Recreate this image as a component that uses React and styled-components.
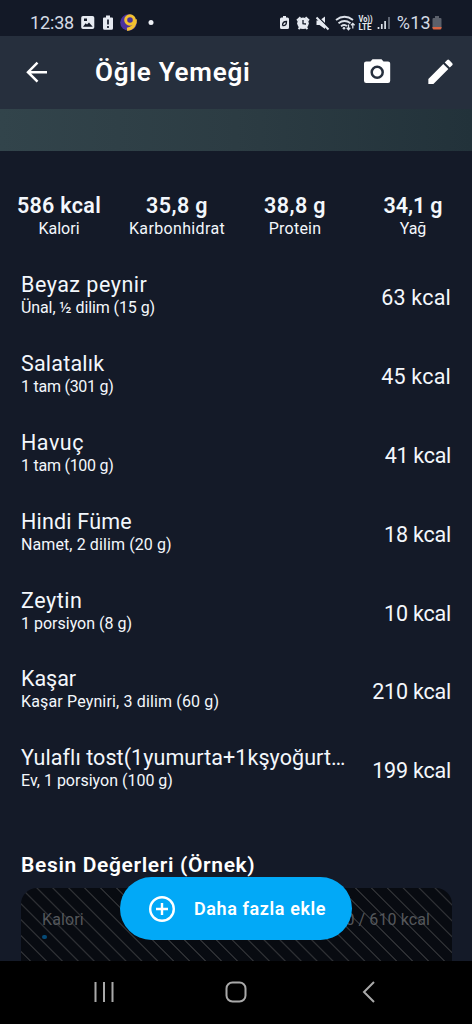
import React from 'react';
import styled, { createGlobalStyle } from 'styled-components';

const GlobalStyle = createGlobalStyle`
    body {
        margin: 0;
        background: #141a28;
        overflow: hidden;
    }

    * {
        box-sizing: border-box;
    }
`;

const Screen = styled.div`
    position: relative;
    display: flex;
    flex-direction: column;
    width: 472px;
    height: 1024px;
    overflow: hidden;
    background: #141a28;
    color: #f3f7fc;
    font-family: Roboto, "Noto Sans", sans-serif;
`;

const StatusBar = styled.div`
    flex: none;
    display: flex;
    align-items: center;
    justify-content: space-between;
    height: 36px;
    padding: 9px 29px 0 30px;
    background: #131927;
`;

const StatusGroup = styled.div`
    display: flex;
    align-items: center;
    gap: ${(p) => p.$gap || 0}px;

    svg {
        display: block;
    }
`;

const StatusText = styled.span`
    font-size: 18px;
    line-height: 20px;
    letter-spacing: ${(p) => p.$track || 0}px;
    color: #d5dbe5;
`;

const Header = styled.header`
    flex: none;
    display: flex;
    align-items: center;
    height: 73px;
    padding: 0 18px 0 22px;
    background: #262f3d;
`;

const IconButton = styled.button`
    display: flex;
    padding: 0;
    border: none;
    background: none;
    color: #fff;

    & + & {
        margin-left: 35px;
    }
`;

const Title = styled.h1`
    flex: 1;
    margin: 0 0 1px 43px;
    font-size: 26px;
    font-weight: 600;
    line-height: 30px;
    letter-spacing: 0.75px;
    color: #fff;
`;

const Banner = styled.div`
    flex: none;
    height: 42px;
    background: linear-gradient(to right, #32444b, #2c3c43 50%, #22323a);
`;

const Content = styled.main`
    flex: 1;
    min-height: 0;
    overflow: hidden;
`;

const Stats = styled.div`
    display: grid;
    grid-template-columns: repeat(4, 1fr);
    padding-top: 42px;
    text-align: center;
`;

const StatValue = styled.div`
    font-size: 21.5px;
    font-weight: 600;
    line-height: 25px;
    letter-spacing: ${(p) => p.$track}px;
`;

const StatLabel = styled.div`
    font-size: 16px;
    line-height: 21px;
    letter-spacing: ${(p) => p.$track}px;
`;

const FoodList = styled.ul`
    margin: 20px 0 0;
    padding: 0;
    list-style: none;
`;

const FoodRow = styled.li`
    display: flex;
    align-items: center;
    justify-content: space-between;
    height: 78.8px;
    padding: 0 21px;
`;

const FoodText = styled.div`
    padding-bottom: 4px;
`;

const FoodName = styled.div`
    font-size: 21.5px;
    line-height: 24px;
    white-space: nowrap;
    letter-spacing: ${(p) => p.$track}px;
`;

const FoodAmount = styled.div`
    font-size: 16px;
    line-height: 22px;
    white-space: nowrap;
    letter-spacing: ${(p) => p.$track}px;
`;

const FoodKcal = styled.div`
    font-size: 21.5px;
    line-height: 26px;
    white-space: nowrap;
    letter-spacing: ${(p) => p.$track}px;
`;

const SectionTitle = styled.h2`
    margin: 41px 21px 0;
    font-size: 21px;
    font-weight: 600;
    line-height: 26px;
    letter-spacing: 0.65px;
    color: #fff;
`;

const LockedCard = styled.div`
    height: 96px;
    margin: 10px 20px 0 21px;
    padding: 22px 22px 0 21px;
    border-radius: 16px;
    background:
        repeating-linear-gradient(
            45deg,
            #2d2f33 0,
            #2d2f33 0.7px,
            transparent 1.3px,
            transparent 10.66px,
            #2d2f33 11.26px
        ),
        #080b11;
    color: #54575b;
    font-size: 16px;
    line-height: 20px;
`;

const LockedLine = styled.div`
    display: flex;
    justify-content: space-between;
    letter-spacing: 0.1px;
`;

const Progress = styled.div`
    width: 5px;
    height: 4px;
    margin-top: 5px;
    border-radius: 2px;
    background: #064b78;
`;

const AddButton = styled.button`
    position: absolute;
    left: 120px;
    top: 877px;
    display: flex;
    align-items: center;
    width: 232px;
    height: 63px;
    padding: 0 0 0 28px;
    border: none;
    border-radius: 32px;
    background: #02a9f7;
    color: #fff;
    font-family: inherit;
    font-size: 18px;
    font-weight: 600;
    letter-spacing: 0.6px;
    white-space: nowrap;

    svg {
        flex: none;
        margin-right: 18px;
    }
`;

const NavBar = styled.nav`
    flex: none;
    display: flex;
    align-items: center;
    justify-content: space-between;
    height: 63px;
    padding: 0 92px 2px;
    background: #000;
`;

const stats = [
    { value: '586 kcal', label: 'Kalori', valueTrack: 0.3, labelTrack: 0 },
    { value: '35,8 g', label: 'Karbonhidrat', valueTrack: 0.4, labelTrack: 0.35 },
    { value: '38,8 g', label: 'Protein', valueTrack: 0.4, labelTrack: 0.25 },
    { value: '34,1 g', label: 'Yağ', valueTrack: -0.1, labelTrack: 0 },
];

const foods = [
    { name: 'Beyaz peynir', amount: 'Ünal, ½ dilim (15 g)', kcal: 63, track: 0.5, amountTrack: -0.1, kcalTrack: 0.2 },
    { name: 'Salatalık', amount: '1 tam (301 g)', kcal: 45, track: 0.2, amountTrack: -0.25, kcalTrack: 0.2 },
    { name: 'Havuç', amount: '1 tam (100 g)', kcal: 41, track: 0.5, amountTrack: -0.25, kcalTrack: -0.3 },
    { name: 'Hindi Füme', amount: 'Namet, 2 dilim (20 g)', kcal: 18, track: 0.2, amountTrack: 0.1, kcalTrack: -0.2 },
    { name: 'Zeytin', amount: '1 porsiyon (8 g)', kcal: 10, track: 0.55, amountTrack: 0, kcalTrack: -0.2 },
    { name: 'Kaşar', amount: 'Kaşar Peyniri, 3 dilim (60 g)', kcal: 210, track: -0.05, amountTrack: 0.15, kcalTrack: -0.2 },
    { name: 'Yulaflı tost(1yumurta+1kşyoğurt…', amount: 'Ev, 1 porsiyon (100 g)', kcal: 199, track: 0.07, amountTrack: 0, kcalTrack: -0.2 },
];

const NotificationIcons = () => (
    <svg width="80" height="20" viewBox="0 0 80 20">
        <path fill="#e6eaf1" fillRule="evenodd" d="M3 3h9.500A1.800 1.800 0 0 1 14.300 4.800v9.500a1.800 1.800 0 0 1-1.800 1.800H3a1.800 1.800 0 0 1-1.800-1.800V4.800A1.800 1.800 0 0 1 3 3zm0 10.800h9.700L9 9.500l-2 2-1.300-1.200zM4 5.500V8h3V5.500z" />
        <path fill="#e6eaf1" d="M26 2.500h4v2h2a1 1 0 0 1 1 1v9.700a1.500 1.500 0 0 1-1.500 1.500h-7a1.500 1.500 0 0 1-1.500-1.500V5.500a1 1 0 0 1 1-1h2z" />
        <path stroke="#141a28" strokeWidth="1.700" d="M28 6.500v5M28 13v2" />
        <circle cx="48.500" cy="9.500" r="8.300" fill="#4a319d" />
        <circle cx="50" cy="7" r="4.300" fill="none" stroke="#f3c12f" strokeWidth="3" />
        <path d="M55.300 6.500c.5 5-2.500 9.300-8.300 9.800" fill="none" stroke="#f3c12f" strokeWidth="3.300" />
        <circle cx="71" cy="9.500" r="2.500" fill="#eef1f6" />
    </svg>
);

const SystemIcons = () => (
    <svg width="119" height="20" viewBox="0 0 119 20">
        <path fill="#e6eaf1" d="M5 3h3v1.500h1.500A1.500 1.500 0 0 1 11 6v8.500A1.500 1.500 0 0 1 9.500 16h-6A1.500 1.500 0 0 1 2 14.500V6a1.500 1.500 0 0 1 1.500-1.500H5z" />
        <path d="M4.500 12.500c0-3.500 1.500-4 4-4 0 3-1 4.300-4 4" fill="none" stroke="#141a28" strokeWidth="1.300" />
        <circle cx="25" cy="10.300" r="5.800" fill="#e6eaf1" />
        <path d="M19 7.500 22.500 4.200M31 7.500l-3.500-3.300M20.500 16l1.500-1.500M29.500 16 28 14.500" stroke="#e6eaf1" strokeWidth="1.900" />
        <path d="M25 7v3.700l3 .3" fill="none" stroke="#141a28" strokeWidth="1.300" />
        <path fill="#e6eaf1" d="M38.500 7.500h3l5.500-4v12.500l-5.500-4h-3z" />
        <path d="m39.500 3.500 12 12" stroke="#141a28" strokeWidth="1.600" />
        <path d="m38.500 4.500 12 12" stroke="#e6eaf1" strokeWidth="1.900" />
        <g fill="none" stroke="#dce1e9" strokeWidth="1.900">
            <path d="M58 7q8.500-6.500 17 0M60.500 10.200q6-4.500 12 0M63 13.200q3.500-2.500 6 0" />
            <path d="M70.500 11.500v5m-1.800-1.700 1.800 1.900 1.800-1.900M74.800 15.500v-5m-1.800 1.800 1.800-1.900 1.800 1.900" strokeWidth="1.300" />
        </g>
        <circle cx="66" cy="15.300" r="1.300" fill="#dce1e9" />
        <g fill="#e6eaf1" fontFamily="Roboto" fontWeight="700" fontSize="8.500">
            <text x="80.500" y="9" textLength="14" lengthAdjust="spacingAndGlyphs">Vo))</text>
            <text x="80.500" y="17" textLength="13" lengthAdjust="spacingAndGlyphs">LTE</text>
        </g>
        <path d="M100.500 14v2M103.800 11v5M107.100 8v8" stroke="#dce1e9" strokeWidth="1.700" />
        <path d="M111 4v12" stroke="#6b727f" strokeWidth="1.700" />
    </svg>
);

const BatteryIcon = () => (
    <svg width="12" height="16" viewBox="0 0 12 16">
        <path fill="#5b606b" d="M4 1h4v2h1.500a1 1 0 0 1 1 1v9H1.500V4a1 1 0 0 1 1-1H4z" />
        <path fill="#d96543" d="M1.500 12h9v1A1.500 1.500 0 0 1 9 14.500H3A1.500 1.500 0 0 1 1.500 13z" />
    </svg>
);

const BackIcon = () => (
    <svg width="30" height="30" viewBox="0 0 30 30" fill="none" stroke="currentColor" strokeWidth="2.500">
        <path d="M25 14.200H7M15.500 4.700 6 14.200l9.500 9.500" />
    </svg>
);

const CameraIcon = () => (
    <svg width="30" height="30" viewBox="0 0 30 30">
        <path fill="currentColor" d="M10.500 1.200h9l2 2.200H26a2.200 2.200 0 0 1 2.200 2.200v17.200A2.200 2.200 0 0 1 26 25H4.200A2.200 2.200 0 0 1 2 22.800V5.600a2.200 2.200 0 0 1 2.200-2.200h4.300z" />
        <circle cx="15.200" cy="14.200" r="5.500" fill="none" stroke="#262f3d" strokeWidth="2.500" />
    </svg>
);

const PencilIcon = () => (
    <svg width="27" height="27" viewBox="2 2.500 20 20">
        <path fill="currentColor" d="M3 17.250V21h3.750L17.810 9.940l-3.750-3.750zM20.710 7.040a1 1 0 0 0 0-1.410l-2.340-2.340a1 1 0 0 0-1.410 0l-1.830 1.830 3.750 3.750z" />
    </svg>
);

const App = () =>
{
    return (
        <>
            <GlobalStyle />
            <Screen>
                <StatusBar>
                    <StatusGroup $gap={6}>
                        <StatusText $track={-0.15}>12:38</StatusText>
                        <NotificationIcons />
                    </StatusGroup>
                    <StatusGroup>
                        <SystemIcons />
                        <StatusText $track={0.3}>%13</StatusText>
                        <BatteryIcon />
                    </StatusGroup>
                </StatusBar>
                <Header>
                    <IconButton aria-label="Geri"><BackIcon /></IconButton>
                    <Title>Öğle Yemeği</Title>
                    <IconButton aria-label="Kamera"><CameraIcon /></IconButton>
                    <IconButton aria-label="Düzenle"><PencilIcon /></IconButton>
                </Header>
                <Banner />
                <Content>
                    <Stats>
                        {stats.map((s) => (
                            <div key={s.label}>
                                <StatValue $track={s.valueTrack}>{s.value}</StatValue>
                                <StatLabel $track={s.labelTrack}>{s.label}</StatLabel>
                            </div>
                        ))}
                    </Stats>
                    <FoodList>
                        {foods.map((f) => (
                            <FoodRow key={f.name}>
                                <FoodText>
                                    <FoodName $track={f.track}>{f.name}</FoodName>
                                    <FoodAmount $track={f.amountTrack}>{f.amount}</FoodAmount>
                                </FoodText>
                                <FoodKcal $track={f.kcalTrack}>{f.kcal} kcal</FoodKcal>
                            </FoodRow>
                        ))}
                    </FoodList>
                    <SectionTitle>Besin Değerleri (Örnek)</SectionTitle>
                    <LockedCard>
                        <LockedLine>
                            <span>Kalori</span>
                            <span>0 / 610 kcal</span>
                        </LockedLine>
                        <Progress />
                    </LockedCard>
                </Content>
                <NavBar>
                    <svg width="24" height="24" viewBox="0 0 24 24" stroke="#a9a9a9" strokeWidth="2">
                        <path d="M3.500 2v20M12 2v20M20.500 2v20" />
                    </svg>
                    <svg width="24" height="24" viewBox="0 0 24 24" fill="none" stroke="#a9a9a9" strokeWidth="2">
                        <rect x="2.500" y="2.500" width="19" height="19" rx="6" />
                    </svg>
                    <svg width="24" height="24" viewBox="0 0 24 24" fill="none" stroke="#a9a9a9" strokeWidth="2">
                        <path d="M18 2 8 12l10 10" />
                    </svg>
                </NavBar>
                <AddButton>
                    <svg width="28" height="28" viewBox="0 0 28 28" fill="none" stroke="#fff" strokeWidth="2.400">
                        <circle cx="14" cy="14" r="11.800" />
                        <path d="M14 8v12M8 14h12" />
                    </svg>
                    Daha fazla ekle
                </AddButton>
            </Screen>
        </>
    );
}

export default App;
